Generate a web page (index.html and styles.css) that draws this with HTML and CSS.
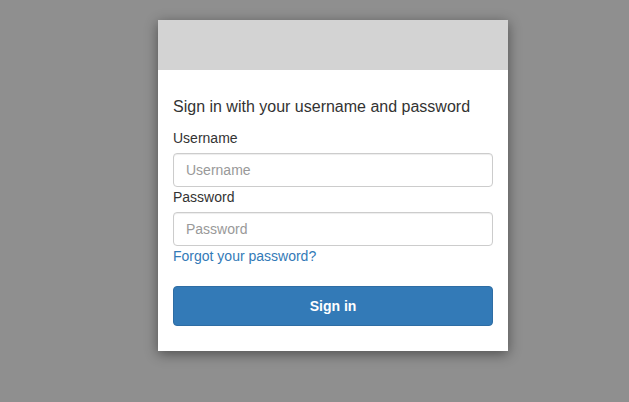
FILE: index.html
```html
<!DOCTYPE html>
<html>
<head>
<meta charset="utf-8">
<link rel="stylesheet" href="styles.css">
</head>
<body>
<div class="card">
  <div class="card-header"></div>
  <div class="card-body">
    <div class="title">Sign in with your username and password</div>
    <label class="label" for="u">Username</label>
    <input class="field" id="u" type="text" placeholder="Username">
    <label class="label" for="p">Password</label>
    <input class="field" id="p" type="password" placeholder="Password">
    <a class="link" href="#">Forgot your password?</a>
    <button class="btn" type="button">Sign in</button>
  </div>
</div>
</body>
</html>
```
FILE: styles.css
```css
html, body {
  margin: 0;
  padding: 0;
  height: 100%;
}
body {
  background: #8f8f8f;
  font-family: "Liberation Sans", Arial, sans-serif;
  color: #333;
  font-size: 14px;
}
.card {
  width: 350px;
  margin: 20px 0 0 158px;
  background: #fff;
  box-shadow: 0 3px 12px rgba(0, 0, 0, 0.45);
}
.card-header {
  height: 50px;
  background: #d3d3d3;
}
.card-body {
  display: flex;
  flex-direction: column;
  padding: 26px 15px 25px 15px;
}
.title {
  font-size: 16px;
  line-height: 22px;
  margin-bottom: 10px;
}
.label {
  display: block;
  line-height: 20px;
  margin-bottom: 5px;
}
.field {
  box-sizing: border-box;
  width: 320px;
  height: 34px;
  margin: 0;
  padding: 0 12px;
  border: 1px solid #ccc;
  border-radius: 4px;
  font-family: "Liberation Sans", Arial, sans-serif;
  font-size: 14px;
  color: #555;
  box-shadow: inset 0 1px 1px rgba(0, 0, 0, 0.075);
  outline: none;
}
.field::placeholder {
  color: #999;
}
.link {
  color: #337ab7;
  text-decoration: none;
  line-height: 20px;
  align-self: flex-start;
}
.btn {
  margin-top: 20px;
  width: 320px;
  height: 40px;
  background: #337ab7;
  border: 1px solid #2e6da4;
  border-radius: 4px;
  color: #fff;
  font-family: "Liberation Sans", Arial, sans-serif;
  font-size: 14px;
  font-weight: bold;
  padding: 0;
}
```
